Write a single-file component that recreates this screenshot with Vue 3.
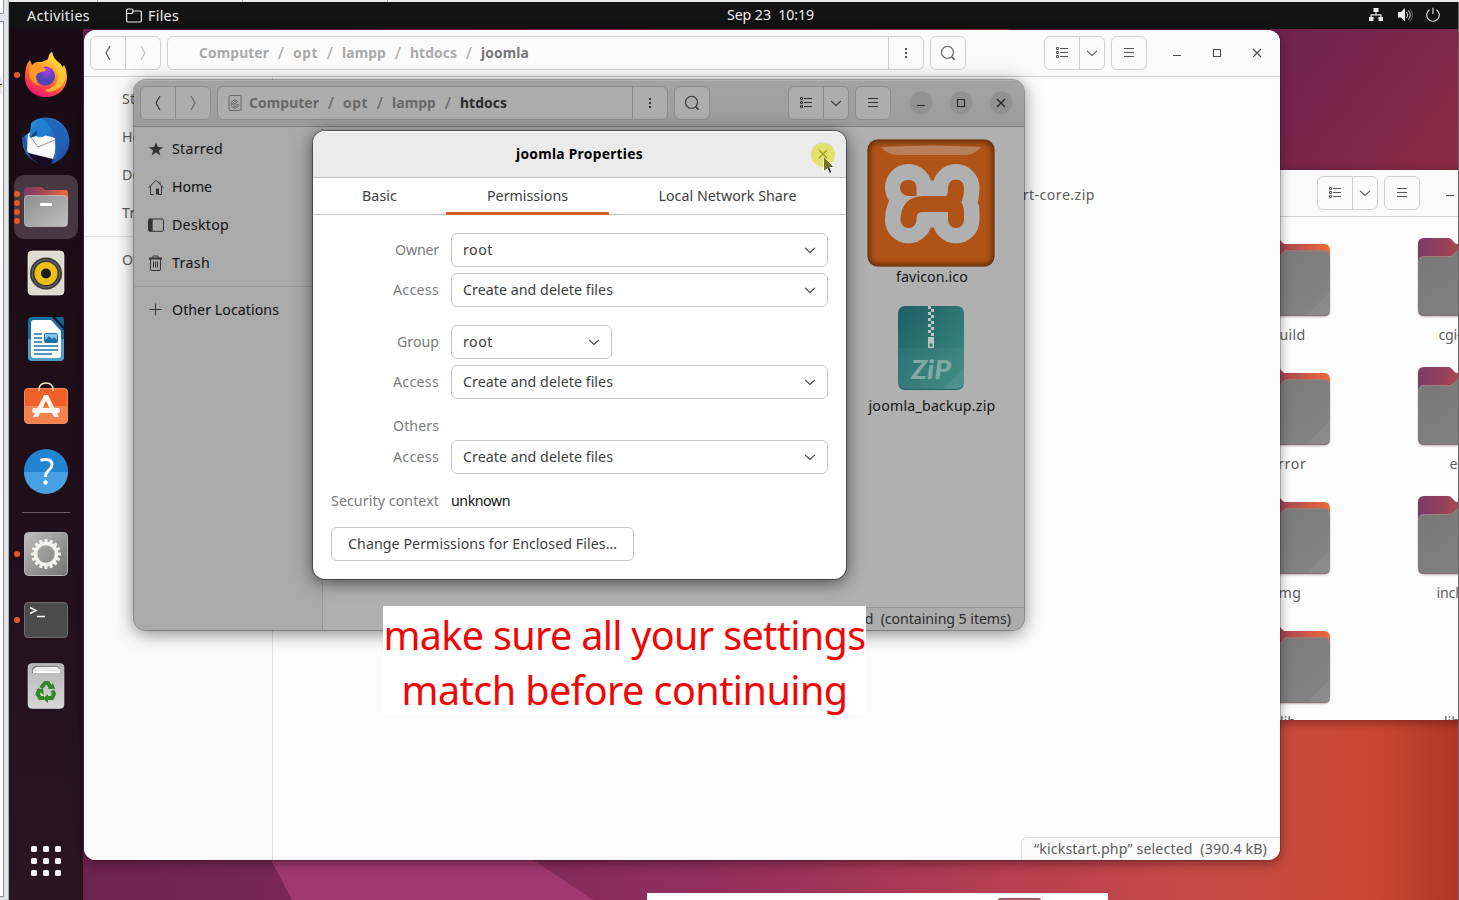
<script setup>
const applyFit = (el, { value }) => {
  el.style.letterSpacing = '0px'
  const natural = el.getBoundingClientRect().width
  const count = el.textContent.length
  if (value && count) el.style.letterSpacing = `${((value - natural) / count).toFixed(3)}px`
}
// Spreads a label's characters so that it occupies a given width in pixels.
const vFit = { mounted: applyFit }

const computer = [
  { name: 'Computer', w: 70 },
  { name: 'opt', w: 25 },
  { name: 'lampp', w: 44 },
]
const back = {
  cls: 'win-a',
  crumbs: [...computer, { name: 'htdocs', w: 47 }, { name: 'joomla', w: 48 }],
}
const front = {
  cls: 'win-b',
  drive: true,
  crumbs: [...computer, { name: 'htdocs', w: 47 }],
}
const places = [
  { name: 'Starred', w: 51, icon: 'star' },
  { name: 'Home', w: 40, icon: 'home' },
  { name: 'Desktop', w: 57, icon: 'desk' },
  { name: 'Trash', w: 38, icon: 'bin' },
]
const folders = [
  { name: 'build', w: 35 }, { name: 'cgi-bin', w: 43 },
  { name: 'error', w: 37 }, { name: 'etc', w: 21 },
  { name: 'img', w: 27 }, { name: 'include', w: 47 },
  { name: 'lib', w: 16 }, { name: 'lib64', w: 32, bare: true },
]
const dock = [
  { icon: 'firefox', dots: 1 },
  { icon: 'thunderbird', dots: 0 },
  { icon: 'files', dots: 4, active: true },
  { icon: 'rhythmbox', dots: 0 },
  { icon: 'writer', dots: 0 },
  { icon: 'software', dots: 0 },
  { icon: 'help', dots: 0 },
  { separator: true },
  { icon: 'settings', dots: 1 },
  { icon: 'terminal', dots: 1 },
  { icon: 'trash', dots: 0 },
]
const teeth = Array.from({ length: 16 }, (_, i) => i * 22.5)
const zipper = Array.from({ length: 10 }, (_, i) => ({ x: i % 2 ? 33 : 30, y: i * 3 }))
const rows = [
  { label: 'Owner', lw: 44, value: 'root', vw: 30, cls: '' },
  { label: 'Access', lw: 46, value: 'Create and delete files', vw: 150, cls: '' },
  { label: 'Group', lw: 42, value: 'root', vw: 30, cls: 'short gap' },
  { label: 'Access', lw: 46, value: 'Create and delete files', vw: 150, cls: '' },
  { label: 'Others', lw: 46, cls: 'heading' },
  { label: 'Access', lw: 46, value: 'Create and delete files', vw: 150, cls: 'tight' },
]
</script>

<template>
  <div class="screen">
    <svg class="defs" width="0" height="0">
      <defs>
        <linearGradient id="tab" x1="0" y1="0" x2="1" y2="0"><stop offset="0" stop-color="#7c3a69" /><stop offset=".4" stop-color="#a04555" /><stop offset="1" stop-color="#ee6a38" /></linearGradient>
        <linearGradient id="slab" x1="0" y1="0" x2="1" y2="1"><stop offset="0" stop-color="#777" /><stop offset="1" stop-color="#858585" /></linearGradient>
        <linearGradient id="grey" x1="0" y1="0" x2="1" y2="1"><stop offset="0" stop-color="#8d8d8d" /><stop offset="1" stop-color="#c0c0c0" /></linearGradient>
        <linearGradient id="gearBg" x1="0" y1="0" x2="1" y2="1"><stop offset="0" stop-color="#bdbdbd" /><stop offset="1" stop-color="#747474" /></linearGradient>
        <linearGradient id="fox" x1=".8" y1="0" x2=".3" y2="1"><stop offset="0" stop-color="#fff44f" /><stop offset=".4" stop-color="#ffa22e" /><stop offset=".7" stop-color="#ff5038" /><stop offset="1" stop-color="#e8147c" /></linearGradient>
        <radialGradient id="globe" cx=".6" cy=".2"><stop offset="0" stop-color="#b13df0" /><stop offset="1" stop-color="#4f45b8" /></radialGradient>
        <linearGradient id="bird" x1="0" y1="0" x2="1" y2="1"><stop offset="0" stop-color="#2f9ae3" /><stop offset="1" stop-color="#1d479e" /></linearGradient>
        <linearGradient id="zipBg" x1="0" y1="0" x2="1" y2="1"><stop offset="0" stop-color="#1d5f66" /><stop offset="1" stop-color="#3c8b82" /></linearGradient>
        <linearGradient id="binBg" x1="0" y1="0" x2="0" y2="1"><stop offset="0" stop-color="#b4b4b4" /><stop offset="1" stop-color="#d8d8d8" /></linearGradient>
      </defs>
      <symbol id="i-prev" viewBox="0 0 16 16"><path d="M10 1 6 8l4 7" fill="none" stroke="currentColor" stroke-width="1.2" /></symbol>
      <symbol id="i-next" viewBox="0 0 16 16"><path d="M6 1l4 7-4 7" fill="none" stroke="currentColor" stroke-width="1.1" /></symbol>
      <symbol id="i-dots" viewBox="0 0 16 16"><path d="M7 3h2v2H7zM7 7h2v2H7zM7 11h2v2H7z" fill="currentColor" /></symbol>
      <symbol id="i-search" viewBox="0 0 16 16"><g fill="none" stroke="currentColor" stroke-width="1.1"><circle cx="7.5" cy="7.3" r="6" /><path d="m12 12 2.6 2.8" stroke-width="1.6" /></g></symbol>
      <symbol id="i-list" viewBox="0 0 16 16"><path d="M2.5 2.5h2v2h-2zM2.5 6.5h2v2h-2zM2.5 10.5h2v2h-2zM6 3.5h8M6 7.5h8M6 11.5h8" fill="none" stroke="currentColor" /></symbol>
      <symbol id="i-down" viewBox="0 0 16 16"><path d="m3 5.8 5 4.7 5-4.7" fill="none" stroke="currentColor" stroke-width="1.1" /></symbol>
      <symbol id="i-menu" viewBox="0 0 16 16"><path d="M3 3.5h10M3 7.5h10M3 11.5h10" stroke="currentColor" /></symbol>
      <symbol id="i-min" viewBox="0 0 16 16"><path d="M4 10.5h8" stroke="currentColor" /></symbol>
      <symbol id="i-max" viewBox="0 0 16 16"><path d="M4.5 4.5h7v7h-7z" fill="none" stroke="currentColor" stroke-width="1.1" /></symbol>
      <symbol id="i-close" viewBox="0 0 16 16"><path d="m4 4 8 8m0-8-8 8" stroke="currentColor" stroke-width="1.2" /></symbol>
      <symbol id="i-drive" viewBox="0 0 16 16"><g fill="none" stroke="currentColor"><rect x="2" y=".5" width="12" height="15" rx="1.2" /><path d="M10.600 6A4 4 0 1 0 12 9M9.700 7.600A2.200 2.200 0 1 0 10.200 9" /><path d="m8 9 3-3" /></g><circle cx="8" cy="9" r=".8" fill="currentColor" /></symbol>
      <symbol id="i-star" viewBox="0 0 16 16"><path d="m8 1.2 1.8 4.9 5.2.1-4.1 3.2 1.5 5L8 11.5l-4.4 2.9 1.5-5L1 6.2l5.2-.1z" fill="currentColor" /></symbol>
      <symbol id="i-home" viewBox="0 0 16 16"><path d="M.5 8.8 8 1.3l7.5 7.5M2.5 7v8.5h3M13.5 7v8.5h-3M12 5V2.5" fill="none" stroke="currentColor" /><path d="M8 9.5h3v6H8z" fill="currentColor" /></symbol>
      <symbol id="i-desk" viewBox="0 0 16 16"><rect x=".5" y="2" width="15" height="12.3" rx="1.2" fill="none" stroke="currentColor" /><path d="M1 2h3.7v12H1z" fill="currentColor" /></symbol>
      <symbol id="i-bin" viewBox="0 0 16 16"><g fill="none" stroke="currentColor"><path d="M5 3V1h5v2M5.500 6.500v6M7.500 6.500v6M9.500 6.500v6" /><rect x="2.500" y="3.500" width="10" height="12" rx="1.300" /></g><path d="M1 2.500h13v2H1z" fill="currentColor" /></symbol>
      <symbol id="i-plus" viewBox="0 0 16 16"><path d="M2 8h12M8 2v12" stroke="currentColor" transform="translate(-.5 -.5)" /></symbol>

      <symbol id="a-firefox" viewBox="0 0 64 64">
        <path d="M12 25q1-5 4-8l2 5q4-4 9-3c3-1 6-2 7-3q1-6 4-7 1 6 6 10 3 1 4 6l2-3q3 5 3 11c0 13-9 21-21 21S11 46 11 34q0-5 1-9z" fill="url(#fox)" />
        <path d="M34 17q3-6 4-8 1 6 6 10 8 6 8 15-3 12-13 14-6 2-8-1 11-2 13-12 2-9-10-18z" fill="#ffcf35" opacity=".8" />
        <circle cx="31.500" cy="33" r="9.500" fill="url(#globe)" />
        <path d="M16 24q5-3 11-1l5 3q0 3-5 3-4 1-5 4-1 7 5 10-10-2-12-11 0-5 1-8z" fill="#ff9b22" />
      </symbol>
      <symbol id="a-thunderbird" viewBox="0 0 64 64">
        <circle cx="32" cy="32" r="23.500" fill="url(#bird)" />
        <path d="M9 22q-3 14 6 24 6 7 13 9l12-6-24-8z" fill="#2450a8" />
        <path d="M14 44q10 3 27 5l-5 7-9-.5Q18 52 14 44z" fill="#180c24" />
        <path d="M8 20q3-8 10-11l-2 14-7 5z" fill="#1a0d16" />
        <path d="M14 25q3-3 6-2l21 6 .5 18q0 3-2.500 3l-24-6q-2-1-2-3z" fill="#f8f8f8" />
        <path d="m15 26 9 12 17-7" fill="none" stroke="#777" stroke-width=".8" />
        <path d="M18 19q4-8 13-10 9 2 13 8-9 4-12 9-5 4-10 1l-6 2q-1-6 2-10z" fill="#1f7fd2" />
        <path d="M28 9q18-1 26 20l-3-2q1 9-3 15l-1-3q-3 9-10 14 5-8 5-20-2-13-14-24z" fill="#2160b6" opacity=".85" />
        <path d="M23 22q-4 1-6 6 4 0 6-3z" fill="#123f74" />
      </symbol>
      <symbol id="a-files" viewBox="0 0 64 64">
        <path d="M10 42V15q0-3 3-3h14q2 0 4 3h20q3 0 3 3v24z" fill="url(#tab)" />
        <rect x="10.500" y="20.500" width="43" height="31" rx="3.500" fill="url(#grey)" stroke="#c4c4c4" stroke-opacity=".7" />
        <rect x="26" y="28" width="12" height="3" rx="1" fill="#fff" />
      </symbol>
      <symbol id="a-rhythmbox" viewBox="0 0 64 64">
        <rect x="14" y="10" width="36" height="44" rx="4" fill="#dedace" stroke="#f1efe8" stroke-width=".7" />
        <circle cx="32" cy="32.500" r="16" fill="#353535" /><circle cx="32" cy="32.500" r="13.700" fill="none" stroke="#666" stroke-width="1.300" /><circle cx="32" cy="32.500" r="11.500" fill="#edc019" /><circle cx="32" cy="32.500" r="5" fill="#1b1b1b" />
      </symbol>
      <symbol id="a-writer" viewBox="0 0 64 64">
        <path d="M18 10h20l12 13v27q0 4-4 4H18q-4 0-4-4V14q0-4 4-4z" fill="#1570a2" /><path d="M14 32h36v18q0 4-4 4H18q-4 0-4-4z" fill="#4e9ec8" /><path d="M41 10h6q3 0 3 3v7z" fill="#126491" />
        <path d="M17 16q0-3 3-3h17l10 11v24q0 3-3 3H20q-3 0-3-3z" fill="#fff" />
        <path d="M20 27h8M20 31h8M20 35h8M20 39h24M20 43h24M20 47h18" stroke="#1873a4" stroke-width="1.700" /><rect x="30.500" y="26.500" width="13" height="9" rx="1" fill="#83c4e8" stroke="#1873a4" /><path d="m31 33 4-4 3 3 2-2 3 3v2H31z" fill="#1873a4" />
      </symbol>
      <symbol id="a-software" viewBox="0 0 64 64">
        <rect x="10.500" y="15.500" width="43" height="35" rx="3.500" fill="#f2602a" stroke="#f08b5d" /><path d="M11 33h42v14q0 3-3 3H14q-3 0-3-3z" fill="#f4824f" />
        <path d="M25 18v-1q0-7 7-7t7 7v1" fill="none" stroke="#fae3c6" stroke-width="1.500" />
        <path d="M30 22h4l11 22h-5l-8-16-8 16h-5z" fill="#fff6ef" /><rect x="18" y="35" width="28" height="5" rx="2.500" fill="#fff6ef" />
      </symbol>
      <symbol id="a-help" viewBox="0 0 64 64">
        <circle cx="32" cy="32" r="22" fill="#2383d3" /><path d="M10 33h44a22 22 0 0 1-44 0z" fill="#46a0e2" />
        <path d="M26.500 21.500q2-1 5-1 6.500 0 6.500 5 0 3-3.500 6-3 2.500-3 6.500" fill="none" stroke="#fff" stroke-width="2.800" /><circle cx="31.500" cy="43.500" r="2.200" fill="#fff" />
      </symbol>
      <symbol id="a-settings" viewBox="0 0 64 64">
        <rect x="10.500" y="10.500" width="43" height="43" rx="4" fill="url(#gearBg)" stroke="#b5b5b5" />
        <g fill="#f4f2ee"><rect v-for="a in teeth" :key="a" x="30.400" y="17" width="3.200" height="5" rx="1" :transform="`rotate(${a} 32 32)`" /></g>
        <circle cx="32" cy="32" r="10.500" fill="none" stroke="#f4f2ee" stroke-width="3.600" />
      </symbol>
      <symbol id="a-terminal" viewBox="0 0 64 64">
        <rect x="10.500" y="14.500" width="43" height="35" rx="3.500" fill="#4b4b4b" stroke="#6e6e6e" /><path d="m16 19.500 6 3-6 3M23 28.500h8" fill="none" stroke="#fff" stroke-width="1.500" />
      </symbol>
      <symbol id="a-trash" viewBox="0 0 64 64">
        <rect x="14" y="9.500" width="36" height="45" rx="4" fill="url(#binBg)" stroke="#d5d5d5" stroke-width=".6" /><path d="M18 19q0-6 3-7h22q3 1 3 7z" fill="#777" /><path d="M19 19v-3l3-3h21l3 3v3z" fill="#fff" /><path d="m19 16 26 1M21 14l22 1" stroke="#aaa" stroke-width=".5" />
        <g fill="none" stroke="#2f8a26" stroke-width="4"><path d="m27 34 4-5h3l3 5" /><path d="M38.500 36.500 40 40l-2 4h-5" /><path d="M30 44h-4l-2.500-4 2.500-5" /></g>
        <g fill="#2f8a26"><path d="m34 35 7 0-2-6zM34 40v9l-5-4.500zM22 35h7l1 6z" /></g>
      </symbol>
      <symbol id="a-folder" viewBox="0 0 84 82">
        <path d="M0 24V6q0-6 6-6h24q2 0 3 1l3.500 3.800q1 1.200 3 1.200H78q6 0 6 7v20H0z" fill="url(#tab)" />
        <path d="M0 25q0-7 6-7h26q2 0 3.500-2l2.500-2.500q1.500-1.200 3-1.200h37q6 0 6 6V72q0 6-6 6H6q-6 0-6-6z" fill="url(#slab)" /><path d="M84 54v18q0 6-6 6H60z" fill="#fff" opacity=".06" />
        <path d="M.5 25q0-6.500 6-6.500H32q2 0 3.800-2l2.500-2.500q1.200-1.200 3-1.200H78q5.500 0 5.500 6" fill="none" stroke="#b0827e" stroke-width=".7" /><path d="M1 75q2 2.700 5 2.700h72q4 0 5.500-3" fill="none" stroke="#8b6565" stroke-width=".8" />
      </symbol>
    </svg>

    <div class="host-top"><i></i><i></i><i></i></div>
    <div class="host-left"><i class="cap"></i><i class="box"></i><i class="mark"></i></div>

    <div class="desktop">
      <svg class="wall" viewBox="0 0 1449 898" preserveAspectRatio="none">
        <defs>
          <linearGradient id="w1" gradientUnits="userSpaceOnUse" x1="70" y1="0" x2="1449" y2="0"><stop offset="0" stop-color="#6d2350" /><stop offset=".35" stop-color="#862b5c" /><stop offset=".5" stop-color="#97315a" /><stop offset=".67" stop-color="#b63f50" /><stop offset=".82" stop-color="#c84b46" /><stop offset=".94" stop-color="#c94731" /><stop offset="1" stop-color="#ae3727" /></linearGradient>
          <linearGradient id="w2" gradientUnits="userSpaceOnUse" x1="1260" y1="20" x2="1449" y2="170"><stop offset="0" stop-color="#6d234c" /><stop offset=".5" stop-color="#7b264a" /><stop offset="1" stop-color="#8c2a43" /></linearGradient>
        </defs>
        <rect width="1449" height="898" fill="url(#w1)" /><rect x="1000" width="449" height="300" fill="url(#w2)" />
        <path d="M262 858h262l60 40H283z" fill="#a03871" />
      </svg>

      <header class="topbar">
        <span class="act" v-fit="63">Activities</span>
        <svg class="tb-files" viewBox="0 0 16 16"><path d="M.6 12.500V2.500q0-1.500 1.500-1.500h3.500q1.500 0 1.500 2h7q1.300 0 1.300 1.500v8q0 1.500-1.500 1.500H2q-1.400 0-1.400-1.500zM1 5.500h4q2 0 2-2.500" fill="none" stroke="#eee" stroke-width="1.200" /></svg>
        <span class="files-label" v-fit="31">Files</span>
        <span class="clock" v-fit="87">Sep 23&nbsp; 10:19</span>
        <div class="tray">
          <svg viewBox="0 0 16 16"><path d="M5.500 1h5v4h-2v2.200h5V10H15v4h-4.500v-4h1.800V8.500H3.700V10h1.800v4H1v-4h1.500V7.200h5V5h-2z" fill="#eee" /></svg>
          <svg viewBox="0 0 16 16"><path d="M1 5h3l4-4v13.500l-4-4H1z" fill="#eee" /><path d="M9.500 5q2.500 3 0 6M11.500 3.500q3.500 4.500 0 9" fill="none" stroke="#ddd" /><path d="M13 2q5 6 0 12" fill="none" stroke="#777" stroke-width=".8" /></svg>
          <svg viewBox="0 0 16 16"><path d="M4.500 2.700a6.300 6.300 0 1 0 7 0M8 .8V7" fill="none" stroke="#ddd" stroke-width="1.200" /></svg>
        </div>
      </header>

      <nav class="dock">
        <template v-for="(d, i) in dock" :key="i">
          <div v-if="d.separator" class="sep"></div>
          <div v-else class="app">
            <div class="tile" :class="{ active: d.active }"><svg viewBox="0 0 64 64"><use :href="`#a-${d.icon}`" /></svg></div>
            <div class="dots"><i v-for="n in d.dots" :key="n"></i></div>
          </div>
        </template>
        <div class="grid"><i v-for="n in 9" :key="n"></i></div>
      </nav>

      <section class="window win-c">
        <header class="bar">
          <div class="group view"><span><svg><use href="#i-list" /></svg></span><span class="narrow"><svg><use href="#i-down" /></svg></span></div>
          <div class="group one"><span><svg><use href="#i-menu" /></svg></span></div>
          <div class="controls"><span v-for="k in ['min', 'max', 'close']" :key="k"><svg><use :href="`#i-${k}`" /></svg></span></div>
        </header>
        <div class="shelf">
          <div v-for="f in folders" :key="f.name" class="folder">
            <svg :class="{ bare: f.bare }" viewBox="0 0 84 82"><use href="#a-folder" /></svg>
            <span v-fit="f.w">{{ f.name }}</span>
          </div>
        </div>
      </section>

      <section v-for="w in [back, front]" :key="w.cls" class="window" :class="w.cls">
        <header class="bar">
          <div class="group nav"><span><svg><use href="#i-prev" /></svg></span><span class="off"><svg><use href="#i-next" /></svg></span></div>
          <div class="group path">
            <div class="crumbs">
              <svg class="drive"><use v-if="w.drive" href="#i-drive" /></svg>
              <template v-for="(c, i) in w.crumbs" :key="c.name">
                <em v-if="i">/</em><b :class="{ current: i === w.crumbs.length - 1 }" v-fit="c.w">{{ c.name }}</b>
              </template>
            </div>
            <span class="more"><svg><use href="#i-dots" /></svg></span>
          </div>
          <div class="group one"><span><svg><use href="#i-search" /></svg></span></div>
          <div class="group view"><span><svg><use href="#i-list" /></svg></span><span class="narrow"><svg><use href="#i-down" /></svg></span></div>
          <div class="group one"><span><svg><use href="#i-menu" /></svg></span></div>
          <div class="controls"><span v-for="k in ['min', 'max', 'close']" :key="k"><svg><use :href="`#i-${k}`" /></svg></span></div>
        </header>
        <div class="body">
          <aside>
            <div v-for="p in places" :key="p.name" class="place"><svg><use v-if="w.drive" :href="`#i-${p.icon}`" /></svg><span v-fit="p.w">{{ p.name }}</span></div>
            <div class="place other"><svg><use v-if="w.drive" href="#i-plus" /></svg><span v-fit="107">Other Locations</span></div>
          </aside>
          <main v-if="w.drive" class="files">
            <figure>
              <svg width="128" height="128" viewBox="0 0 128 128">
                <defs>
                  <filter id="soft"><feGaussianBlur stdDeviation="2.500" /></filter>
                </defs>
                <rect x=".5" y=".5" width="127" height="127" rx="10" fill="#b05317" />
                <clipPath id="xc"><rect x=".5" y=".5" width="127" height="127" rx="10" /></clipPath>
                <rect x="0" y="0" width="128" height="128" rx="11" fill="none" stroke="#64300b" stroke-width="7" filter="url(#soft)" clip-path="url(#xc)" />
                <path d="M14 8q50-3 100 0-6 8-16 8H32Q20 16 14 8z" fill="#b98766" opacity=".85" />
                <g fill="none" stroke-linecap="round" stroke-linejoin="round">
                  <path d="M41.500 48.500v.1M41.500 81q0-16 15-16H82q7-3 7-16.500M86 66l3 6v9" stroke="#b0b0b0" stroke-width="47" />
                  <path d="M41.500 81q0-16 15-16H82q7-3 7-16.500M83 65q6 1 6 8v8" stroke="#b05317" stroke-width="16" />
                </g>
                <path d="M49.500 57H41q-8-1-8-8.500T41.500 41q8 0 8 8z" fill="#b05317" />
              </svg>
              <figcaption v-fit="72">favicon.ico</figcaption>
            </figure>
            <figure class="zip">
              <svg width="66" height="84" viewBox="0 0 66 84">
                <rect width="66" height="84" rx="7" fill="url(#zipBg)" /><path d="M0 42h66v35q0 7-7 7H7q-7 0-7-7z" fill="#fff" opacity=".045" /><path d="M66 62v15q0 7-7 7H44z" fill="#fff" opacity=".06" /><path d="M1 80q2 3.500 6 3.500h52q4 0 6-3.500" fill="none" stroke="#195e60" />
                <rect v-for="z in zipper" :key="z.y" :x="z.x" :y="z.y" width="3" height="3" fill="#b9c4c3" /><path d="M30 31h6v11h-6zM31.500 37.500v3h3v-3z" fill="#b9c4c3" fill-rule="evenodd" />
                <text x="13" y="73" font-size="27" textLength="40" lengthAdjust="spacingAndGlyphs">ZiP</text>
              </svg>
              <figcaption v-fit="127">joomla_backup.zip</figcaption>
            </figure>
            <div class="status"><span v-fit="251">“joomla” selected&nbsp; (containing 5 items)</span></div>
          </main>
          <main v-else class="files">
            <span class="core" v-fit="121">kickstart-core.zip</span>
            <div class="status"><span v-fit="233">“kickstart.php” selected&nbsp; (390.4 kB)</span></div>
          </main>
        </div>
      </section>

      <section class="dialog">
        <header><b v-fit="127">joomla Properties</b><span class="x"><svg><use href="#i-close" /></svg></span></header>
        <div class="tabs"><div><span v-fit="35">Basic</span></div><div class="on"><span v-fit="81">Permissions</span></div><div><span v-fit="138">Local Network Share</span></div></div>
        <div class="form">
          <div v-for="(r, i) in rows" :key="i" class="row" :class="r.cls">
            <label><span v-fit="r.lw">{{ r.label }}</span></label>
            <div v-if="r.value" class="select"><span v-fit="r.vw">{{ r.value }}</span><svg><use href="#i-down" /></svg></div>
          </div>
          <div class="row security"><label><span v-fit="108">Security context</span></label><strong v-fit="59">unknown</strong></div>
          <button><span v-fit="269">Change Permissions for Enclosed Files…</span></button>
        </div>
      </section>

      <div class="halo"></div>
      <svg class="pointer" viewBox="0 0 12 19"><path d="M1 1v14.500l3.300-3.200 2.300 5.200 2.400-1-2.300-5H11z" fill="#222" stroke="#fff" stroke-width="1" /><path d="M1 1v13L8.500 10z" fill="#77741c" /></svg>

      <div class="caption"><span v-fit="482">make sure all your settings</span><span v-fit="446">match before continuing</span></div>
      <div class="peek"><i></i></div>
    </div>
  </div>
</template>

<style>
html, body { margin: 0; overflow: hidden; }
</style>

<style scoped>
.screen { position: relative; width: 1459px; height: 900px; overflow: hidden; background: #e3e6ea; font-family: "Noto Sans", "Open Sans", sans-serif; font-size: 14.2px; line-height: 20px; }
.screen * { box-sizing: border-box; }
span, b, strong, figcaption { white-space: nowrap; }
.defs { position: absolute; }
svg { display: block; flex: none; width: 16px; height: 16px; overflow: visible; }
.host-top { position: absolute; left: 10px; top: 0; width: 1449px; height: 2px; display: flex; background: #e8eaed; }
.host-top i { border-right: 1px solid #aaa; width: 88px; }
.host-top i + i { width: 145px; }
.host-left { position: absolute; left: 0; top: 0; width: 9px; height: 900px; background: #e1e5ea; border-right: 1px solid #aaaeb2; display: flex; flex-direction: column; align-items: flex-start; }
.host-left .cap { width: 4px; height: 14px; background: #fff; border: solid #999; border-width: 0 1px 1px 0; }
.host-left .box { width: 4px; height: 876px; margin-top: 7px; background: #fff; border: solid #888; border-width: 1px 1px 1px 0; }
.host-left .mark { position: absolute; left: 0; top: 77px; width: 2px; height: 17px; background: linear-gradient(#e8e8e8 7px, #222 7px, #222 8px, #ecd89a 8px, #ecd89a 10px, #e8e8e8 10px); }
.desktop { position: absolute; left: 9px; top: 2px; width: 1450px; height: 898px; overflow: hidden; border-right: 1px solid #686868; }
.wall { position: absolute; inset: 0; width: 1449px; height: 898px; }

.topbar { position: absolute; left: 0; top: 0; width: 1449px; height: 27px; background: #131313; color: #efefef; display: flex; align-items: center; padding-left: 18px; }
.tb-files { margin-left: 36px; width: 16px; height: 16px; }
.files-label { margin-left: 6px; }
.clock { position: absolute; left: 718px; top: 3px; }
.tray { position: absolute; left: 1359px; top: 5px; display: flex; gap: 12.500px; }

.dock { position: absolute; left: 0; top: 27px; width: 74px; height: 871px; background: linear-gradient(170deg, #180c14, #1f0f19 50%, #2a1521); display: flex; flex-direction: column; padding-top: 13px; }
.app { position: relative; height: 66px; flex: none; padding: 1px 5px; }
.tile { width: 64px; height: 64px; border-radius: 10px; }
.tile.active { background: #463942; }
.tile svg { width: 64px; height: 64px; }
.dots { position: absolute; left: 5px; top: 1px; height: 64px; display: flex; flex-direction: column; justify-content: center; gap: 3px; }
.dots i { width: 6px; height: 6px; border-radius: 50%; background: #e4582a; }
.sep { height: 17px; flex: none; display: flex; align-items: center; padding-left: 13px; }
.sep::before { content: ""; width: 48px; height: 1px; background: #655b61; }
.grid { margin: 127px 0 0 22px; display: grid; grid-template-columns: repeat(3, 6px); gap: 6px; }
.grid i { width: 6px; height: 6px; border-radius: 1.500px; background: #f3f0f1; }

.window { position: absolute; border-radius: 12px; overflow: hidden; color: #5e5e5e; }
.win-a { left: 75px; top: 28px; width: 1196px; height: 830px; background: #fcfcfc; box-shadow: 0 3px 12px rgba(0,0,0,.4), 0 0 0 1px rgba(40,0,20,.2); --line: #d0d0d0; --btn: #fbfbfb; --side: #fafafa; --icon: #585858; --crumb: #aaa; --cur: #777; --path: 757px; }
.win-b { left: 125px; top: 78px; width: 890px; height: 550px; background: #b0b0b0; color: #111; box-shadow: 0 3px 18px rgba(0,0,0,.5), 0 0 0 1px rgba(0,0,0,.28); --line: #8b8b8b; --btn: #adadad; --side: #aaa; --icon: #333; --crumb: #686868; --cur: #2a2a2a; --path: 451px; }
.win-c { left: 1191px; top: 168px; width: 353px; height: 550px; border-radius: 12px 12px 0 0; background: #fcfcfc; box-shadow: 0 2px 10px rgba(0,0,0,.4); --line: #d0d0d0; --btn: #fbfbfb; --icon: #585858; }
.bar { height: 47px; border-bottom: 1px solid var(--line); background: #fafafa; display: flex; align-items: center; gap: 6px; padding: 0 3px 0 6px; color: var(--icon); }
.win-b .bar { background: linear-gradient(#a3a3a3, #9c9c9c); border-bottom-color: #808080; box-shadow: inset 0 1px #b3b3b3; }
.group { height: 34px; flex: none; display: flex; border: 1px solid var(--line); border-radius: 6px; background: var(--btn); }
.group > span { flex: 1; display: flex; align-items: center; justify-content: center; }
.group > span + span, .more { border-left: 1px solid var(--line); }
.group.nav { width: 71px; }
.nav .off svg { opacity: .4; }
.win-b .nav .off svg { opacity: .6; }
.group.one { width: 36px; }
.group.view { width: 61px; margin-left: auto; }
.group .narrow { flex: 0 0 25px; }
.group.path { width: var(--path); }
.crumbs { flex: 1; display: flex; align-items: center; color: var(--crumb); padding-left: 9px; }
.drive { margin-right: 6px; }
.crumbs em { width: 24px; text-align: center; font-style: normal; font-size: 17px; }
.crumbs b { font-weight: 700; font-size: 13.800px; }
.crumbs .current { color: var(--cur); }
.group.path .more { flex: 0 0 35px; }
.controls { display: flex; margin-left: 4px; color: #4c4c4c; }
.controls span { width: 40px; height: 24px; display: flex; justify-content: center; align-items: center; }
.win-b .controls span { background: radial-gradient(circle, #929292 11px, transparent 12px); color: #222; }
.body { display: flex; height: calc(100% - 47px); }
aside { width: 189px; flex: none; background: var(--side); border-right: 1px solid #e0e0e0; padding-top: 3px; }
.win-b aside { border-right-color: #949494; }
.place { height: 38px; display: flex; align-items: center; padding-left: 14px; gap: 8px; }
.place svg { color: #333; }
.place.other { height: 56px; border-top: 1px solid #e0e0e0; margin-top: 4px; padding-bottom: 9px; }
.win-b .place.other { border-top-color: #969696; }
.files { position: relative; flex: 1; }
.core { position: absolute; right: 185px; top: 108px; }
.status { position: absolute; right: 0; bottom: 0; height: 23px; padding: 0 13px 0 12px; border: solid #dcdcdc; border-width: 1px 0 0 1px; border-radius: 6px 0 0 0; background: #fafafa; display: flex; align-items: center; }
.win-b .status { background: #acacac; border-color: #939393; color: #2c2c2c; }
figure { position: absolute; margin: 0; left: 528px; top: 12px; width: 160px; display: flex; flex-direction: column; align-items: center; }
figure.zip { top: 179px; }
figcaption { position: relative; left: 1px; color: #151515; }
figure svg { width: auto; height: auto; }
.zip figcaption { margin-top: 6px; }
.zip text { font-family: Lato, sans-serif; font-weight: 900; font-style: italic; fill: #80aaa5; }
.shelf { width: 344px; display: grid; grid-template-columns: 172px 172px; grid-auto-rows: 129px; padding-top: 21px; margin-left: 2px; }
.folder { display: flex; flex-direction: column; align-items: center; }
.folder svg { width: 84px; height: 82px; filter: drop-shadow(0 1px 1px rgba(0,0,0,.2)); }
.folder svg.bare { visibility: hidden; }
.folder span { margin-top: 5px; }

.dialog { position: absolute; left: 304px; top: 129px; width: 533px; height: 448px; border-radius: 12px; background: #fff; overflow: hidden; box-shadow: 0 3px 18px rgba(0,0,0,.62), 0 0 0 1px rgba(0,0,0,.4); color: #3d3d3d; }
.dialog header { position: relative; height: 47px; background: #ebebeb; border-bottom: 1px solid #bfbfbf; display: flex; align-items: center; justify-content: center; color: #000; box-shadow: inset 0 1px #fafafa; }
.dialog header b { font-size: 13.800px; }
.x { position: absolute; right: 11px; top: 11px; width: 24px; height: 24px; border-radius: 50%; background: #d7d7d7; display: flex; align-items: center; justify-content: center; }
.tabs { display: flex; height: 37px; border-bottom: 1px solid #c6c6c6; }
.tabs div { width: 133px; height: 37px; display: flex; align-items: center; justify-content: center; padding-bottom: 2px; }
.tabs div:last-child { width: 237px; }
.tabs .on { width: 163px; border-bottom: 3px solid #d45a30; padding: 1px 0 0; }
.form { padding: 18px; }
.row { display: flex; align-items: center; height: 34px; margin-bottom: 6px; gap: 12px; }
.row.gap { margin-top: 18px; }
.row.heading { height: 20px; margin: 17px 0 4px; }
.row.tight { margin-bottom: 17px; }
.row label { width: 108px; display: flex; justify-content: flex-end; color: #7b7b7b; }
.select { width: 377px; height: 34px; border: 1px solid #c8c8c8; border-radius: 6px; display: flex; align-items: center; justify-content: space-between; padding: 0 9px 0 11px; }
.short .select { width: 161px; }
.row.security { height: 20px; margin-bottom: 16px; }
strong { font-weight: 400; color: #111; }
button { width: 303px; height: 34px; border: 1px solid #c8c8c8; border-radius: 6px; background: #fff; padding: 0; font: inherit; color: #3d3d3d; }
.halo { position: absolute; left: 802px; top: 141px; width: 24px; height: 24px; border-radius: 50%; background: rgba(232,230,60,.68); }
.pointer { position: absolute; left: 814px; top: 154px; width: 12px; height: 19px; }
.caption { position: absolute; left: 374px; top: 604px; width: 483px; height: 108px; background: #fff; color: #f20505; display: flex; flex-direction: column; align-items: center; font-size: 39.500px; line-height: 55px; padding-top: 2px; }
.caption span { height: 55px; }
.peek { position: absolute; left: 638px; top: 891px; width: 461px; height: 7px; background: #fff; display: flex; align-items: flex-end; padding-left: 351px; }
.peek i { width: 43px; height: 2px; background: #a65d62; border-radius: 2px 2px 0 0; }
</style>
